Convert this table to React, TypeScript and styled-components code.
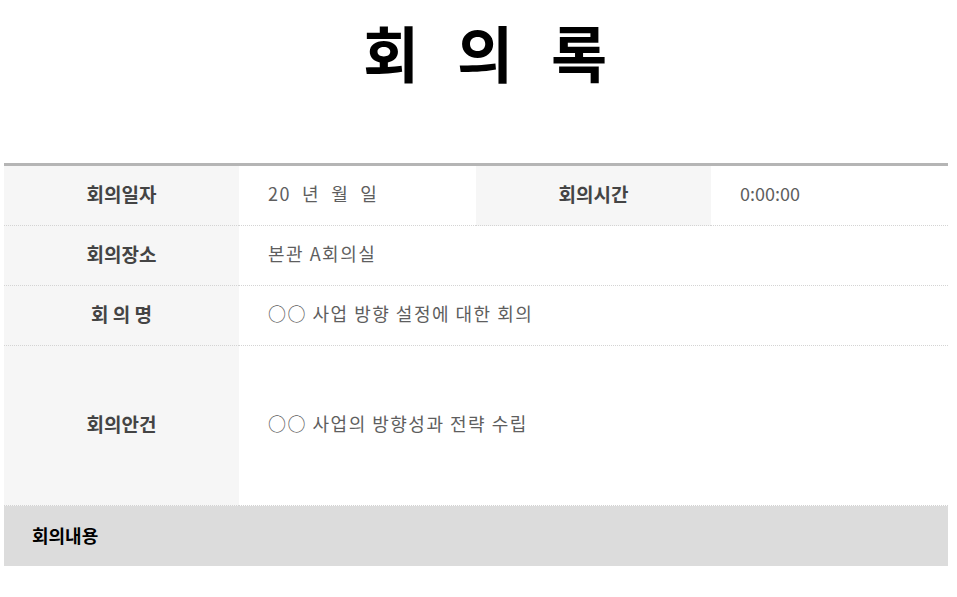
import React from 'react'
import styled, { createGlobalStyle } from 'styled-components'

const GlobalStyle = createGlobalStyle`
  html, body {
    margin: 0;
    padding: 0;
    background: #fff;
  }
  body {
    font-family: "Noto Sans CJK KR", "Noto Sans", sans-serif;
  }
`

const Page = styled.div`
  width: 944px;
  margin-left: 4px;
`

const Title = styled.h1`
  margin: 0;
  padding-top: 12px;
  padding-left: 30px;
  height: 145px;
  box-sizing: border-box;
  text-align: center;
  font-size: 61px;
  line-height: 80px;
  font-weight: 700;
  color: #000;
  letter-spacing: 12px;
`

const Table = styled.div`
  display: grid;
  grid-template-columns: 235px 237px 235px 237px;
  border-top: 3px solid #b5b5b5;
  margin-top: 18px;
`

const Cell = styled.div<{ $tall?: boolean; $span?: number }>`
  display: flex;
  align-items: center;
  box-sizing: border-box;
  height: ${({ $tall }) => ($tall ? 160 : 60)}px;
  padding-bottom: 5px;
  border-bottom: 1px dotted #d4d4d4;
  grid-column: span ${({ $span }) => $span ?? 1};
`

const Label = styled(Cell)`
  justify-content: center;
  background: #f6f6f6;
  color: #444;
  font-size: 19px;
  font-weight: 700;
`

const Value = styled(Cell)<{ $plain?: boolean }>`
  padding-left: 29px;
  color: #5e5e5e;
  font-size: 18px;
  letter-spacing: ${({ $plain }) => ($plain ? 0 : 1.5)}px;
`

const Section = styled.div`
  grid-column: span 4;
  display: flex;
  align-items: center;
  box-sizing: border-box;
  height: 60px;
  padding: 0 0 3px 28px;
  background: #dcdcdc;
  color: #000;
  font-size: 18px;
  font-weight: 700;
`

export default function App() {
  return (
    <>
      <GlobalStyle />
      <Page>
        <Title>회 의 록</Title>
        <Table>
          <Label>회의일자</Label>
          <Value>20&nbsp;&nbsp;년&nbsp;&nbsp;월&nbsp;&nbsp;일</Value>
          <Label>회의시간</Label>
          <Value $plain>0:00:00</Value>

          <Label>회의장소</Label>
          <Value $span={3}>본관 A회의실</Value>

          <Label>회 의 명</Label>
          <Value $span={3}>○○ 사업 방향 설정에 대한 회의</Value>

          <Label $tall>회의안건</Label>
          <Value $tall $span={3}>○○ 사업의 방향성과 전략 수립</Value>

          <Section>회의내용</Section>
        </Table>
      </Page>
    </>
  )
}
